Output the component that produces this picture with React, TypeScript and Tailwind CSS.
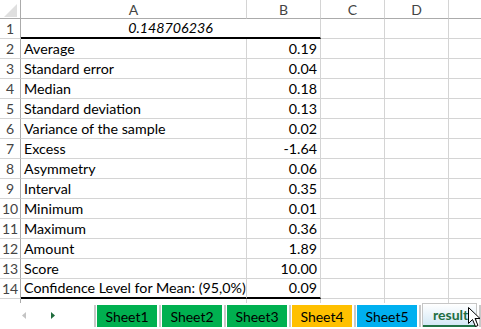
import React from 'react'

type Row = { label: string; value: string }

const stats: Row[] = [
  { label: 'Average', value: '0.19' },
  { label: 'Standard error', value: '0.04' },
  { label: 'Median', value: '0.18' },
  { label: 'Standard deviation', value: '0.13' },
  { label: 'Variance of the sample', value: '0.02' },
  { label: 'Excess', value: '-1.64' },
  { label: 'Asymmetry', value: '0.06' },
  { label: 'Interval', value: '0.35' },
  { label: 'Minimum', value: '0.01' },
  { label: 'Maximum', value: '0.36' },
  { label: 'Amount', value: '1.89' },
  { label: 'Score', value: '10.00' },
  { label: 'Confidence Level for Mean: (95,0%)', value: '0.09' },
]

const tabs = [
  { name: 'Sheet1', bg: 'bg-[#00b050]' },
  { name: 'Sheet2', bg: 'bg-[#00b050]' },
  { name: 'Sheet3', bg: 'bg-[#00b050]' },
  { name: 'Sheet4', bg: 'bg-[#ffc000]' },
  { name: 'Sheet5', bg: 'bg-[#00b0f0]' },
]

const RowHead = ({ n }: { n?: number }) => (
  <div className="w-[21px] shrink-0 border-r border-b border-r-[#ababab] border-b-[#d4d4d4] flex items-center justify-center text-[14px] text-[#444]">
    {n}
  </div>
)

const Blank = ({ w }: { w: string }) => (
  <div className={`${w} shrink-0 border-r border-b border-[#d4d4d4]`} />
)

const Sep = () => (
  <div className="w-[5px] shrink-0 h-[22px] mt-[2px] flex justify-center">
    <div className="w-[2px] h-full bg-[#c8c8c8]" />
  </div>
)

export default function App() {
  return (
    <div className="relative w-[481px] h-[329px] overflow-hidden bg-white text-black font-['Lato','Liberation_Sans',sans-serif]">
      <div className="h-[303px] overflow-hidden">
        {/* column headers */}
        <div className="flex h-[19px]">
          <div className="relative w-[21px] shrink-0 border-r border-b border-r-[#ababab] border-b-[#ababab]">
            <svg className="absolute left-[4px] top-[4px]" width="13" height="13" viewBox="0 0 13 13">
              <polygon points="13,0 13,13 0,13" fill="#dfdfdf" />
            </svg>
          </div>
          {[
            ['A', 'w-[226px]'],
            ['B', 'w-[74px]'],
            ['C', 'w-[64px]'],
            ['D', 'w-[64px]'],
            ['', 'w-[40px]'],
          ].map(([l, w]) => (
            <div
              key={w + l}
              className={`${w} shrink-0 border-r border-b border-r-[#d4d4d4] border-b-[#ababab] flex items-center justify-center text-[14px] text-[#444]`}
            >
              {l}
            </div>
          ))}
        </div>

        {/* row 1 */}
        <div className="flex h-[20px]">
          <RowHead n={1} />
          <div className="w-[300px] shrink-0 border-r border-r-[#d4d4d4] border-b-2 border-b-black flex items-center justify-center text-[14.25px] italic">
            0.148706236
          </div>
          <Blank w="w-[64px]" />
          <Blank w="w-[64px]" />
          <Blank w="w-[40px]" />
        </div>

        {stats.map((r, i) => {
          const last = i === stats.length - 1
          const bottom = last ? 'border-b-2 border-b-black' : 'border-b border-b-[#d4d4d4]'
          return (
            <div key={r.label} className="flex h-[20px]">
              <RowHead n={i + 2} />
              <div className={`w-[226px] shrink-0 border-r border-r-[#d4d4d4] ${bottom} flex items-center pl-[3px] text-[14.25px] whitespace-nowrap`}>
                {r.label}
              </div>
              <div className={`w-[74px] shrink-0 border-r border-r-[#d4d4d4] ${bottom} flex items-center justify-end pr-[3px] text-[14.25px]`}>
                {r.value}
              </div>
              <Blank w="w-[64px]" />
              <Blank w="w-[64px]" />
              <Blank w="w-[40px]" />
            </div>
          )
        })}

        {/* row 15, cut off */}
        <div className="flex h-[20px]">
          <RowHead />
          <Blank w="w-[226px]" />
          <Blank w="w-[74px]" />
          <Blank w="w-[64px]" />
          <Blank w="w-[64px]" />
          <Blank w="w-[40px]" />
        </div>
      </div>

      {/* sheet tabs */}
      <div className="flex h-[26px] text-[14px]">
        <div className="w-[92px] shrink-0 flex items-center gap-[25px] pl-[22px] pb-[1px]">
          <svg width="4" height="7" viewBox="0 0 4 7">
            <polygon points="4,0 4,7 0,3.5" fill="#c4c4c4" />
          </svg>
          <svg width="4" height="7" viewBox="0 0 4 7">
            <polygon points="0,0 0,7 4,3.5" fill="#1e6b3c" />
          </svg>
        </div>
        <Sep />
        {tabs.map((t) => (
          <React.Fragment key={t.name}>
            <div className={`w-[60px] shrink-0 h-[22px] mt-[2px] ${t.bg} flex items-center justify-center`}>
              {t.name}
            </div>
            <Sep />
          </React.Fragment>
        ))}
        <div className="w-[55px] shrink-0 h-[24px] border-x border-t border-[#c6c6c6] bg-gradient-to-b from-white to-[#cfe6f5] flex flex-col">
          <div className="flex-1 flex items-center pl-[10px] font-bold text-[#1f6e43]">result</div>
          <div className="h-[2px] bg-[#217346]" />
        </div>
        <Sep />
      </div>

      {/* mouse pointer */}
      <svg className="absolute left-[468px] top-[307px]" width="13" height="21" viewBox="0 0 13 21">
        <path d="M0.5 0.5 L0.5 16.5 L4.5 12.5 L7.5 19.5 L10 18.5 L7 11.5 L12 11.5 Z" fill="white" stroke="black" strokeWidth="1" />
      </svg>
    </div>
  )
}
